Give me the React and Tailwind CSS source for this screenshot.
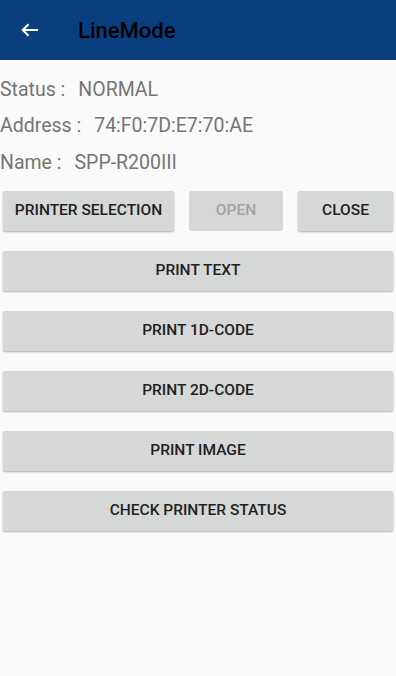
import React from "react";

const btn =
  "h-10 rounded-[2px] bg-[#d6d7d7] text-[15.5px] font-medium uppercase text-[#212121] shadow-[0_1px_2px_rgba(0,0,0,0.3)] flex items-center justify-center";

function Row({ label, value }) {
  return (
    <div className="h-[36.5px] flex items-center text-[19.5px] text-[#757575]">
      <span>{label} :</span>
      <span className="ml-[13px]">{value}</span>
    </div>
  );
}

export default function App() {
  return (
    <div
      className="w-[396px] h-[676px] bg-[#fafafa] flex flex-col"
      style={{ fontFamily: "Roboto, 'Liberation Sans', sans-serif" }}
    >
      <div className="h-[60px] bg-[#0a3f7f] flex items-center">
        <svg width="18" height="14" viewBox="0 0 18 14" className="ml-[21px]">
          <path d="M17 7H2M7.5 1.2L1.7 7l5.8 5.8" fill="none" stroke="#fff" strokeWidth="2" />
        </svg>
        <div className="ml-[39px] text-[22px] font-medium text-black">LineMode</div>
      </div>

      <div className="pt-[11px]">
        <Row label="Status" value="NORMAL" />
        <Row label="Address" value="74:F0:7D:E7:70:AE" />
        <Row label="Name" value="SPP-R200III" />
      </div>

      <div className="mt-[10px] px-[3px] flex flex-col gap-5">
        <div className="flex">
          <button className={`${btn} w-[171px]`}>Printer Selection</button>
          <button className="h-10 ml-[15px] w-[94px] rounded-[2px] bg-[#d6d7d7] text-[15.5px] font-medium uppercase text-[#a3a3a3] flex items-center justify-center">
            Open
          </button>
          <button className={`${btn} ml-[15px] w-[95px]`}>Close</button>
        </div>
        <button className={btn}>Print Text</button>
        <button className={btn}>Print 1D-Code</button>
        <button className={btn}>Print 2D-Code</button>
        <button className={btn}>Print Image</button>
        <button className={btn}>Check Printer Status</button>
      </div>
    </div>
  );
}
